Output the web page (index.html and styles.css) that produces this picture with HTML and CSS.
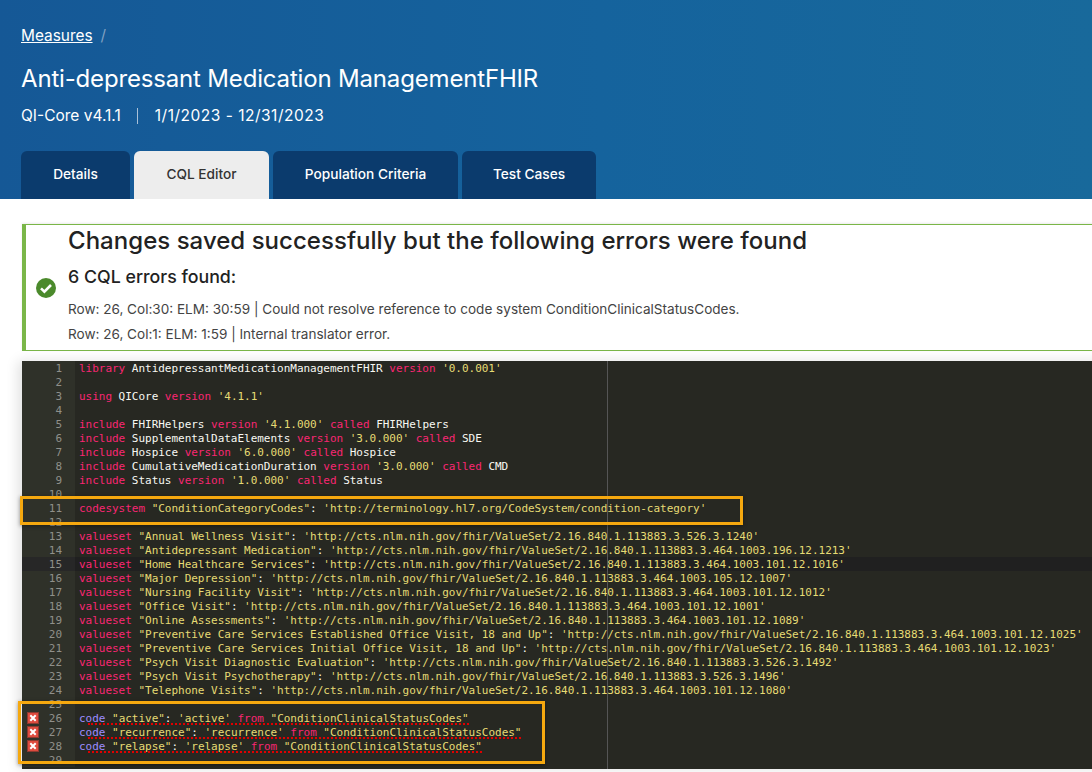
FILE: index.html
```html
<!DOCTYPE html>
<html lang="en">
<head>
<meta charset="utf-8">
<title>Anti-depressant Medication ManagementFHIR</title>
<link rel="stylesheet" href="styles.css">
</head>
<body>
<header class="hero">
  <nav class="crumbs"><a class="crumb-link" href="#">Measures</a><span class="crumb-sep">/</span></nav>
  <h1 class="title">Anti-depressant Medication ManagementFHIR</h1>
  <div class="meta"><span>QI-Core v4.1.1</span><span class="meta-sep"></span><span class="meta-date">1/1/2023 - 12/31/2023</span></div>
  <div class="tabs">
    <a class="tab tab-details">Details</a>
    <a class="tab tab-cql active">CQL Editor</a>
    <a class="tab tab-pop">Population Criteria</a>
    <a class="tab tab-test">Test Cases</a>
  </div>
</header>
<main class="content">
  <section class="alert">
    <svg class="alert-icon" viewBox="0 0 20 20" width="20" height="20"><circle cx="10" cy="10" r="10" fill="#4b8a2c"/><path d="M5 10.4l3.4 3.3L15 7" fill="none" stroke="#fff" stroke-width="2.6"/></svg>
    <div class="alert-body">
      <h2 class="alert-title">Changes saved successfully but the following errors were found</h2>
      <h3 class="alert-sub">6 CQL errors found:</h3>
      <p class="alert-line">Row: 26, Col:30: ELM: 30:59 | Could not resolve reference to code system ConditionClinicalStatusCodes.</p>
      <p class="alert-line">Row: 26, Col:1: ELM: 1:59 | Internal translator error.</p>
    </div>
  </section>
  <section class="editor">
    <div class="print-margin"></div>
    <div class="mark mark-a"></div>
    <div class="mark mark-b"></div>
    <div class="row"><span class="gut">1</span><span class="code"><i class="k">library</i> AntidepressantMedicationManagementFHIR <i class="k">version</i> <i class="s">'0.0.001'</i></span></div>
    <div class="row"><span class="gut">2</span><span class="code"></span></div>
    <div class="row"><span class="gut">3</span><span class="code"><i class="k">using</i> QICore <i class="k">version</i> <i class="s">'4.1.1'</i></span></div>
    <div class="row"><span class="gut">4</span><span class="code"></span></div>
    <div class="row"><span class="gut">5</span><span class="code"><i class="k">include</i> FHIRHelpers <i class="k">version</i> <i class="s">'4.1.000'</i> <i class="k">called</i> FHIRHelpers</span></div>
    <div class="row"><span class="gut">6</span><span class="code"><i class="k">include</i> SupplementalDataElements <i class="k">version</i> <i class="s">'3.0.000'</i> <i class="k">called</i> SDE</span></div>
    <div class="row"><span class="gut">7</span><span class="code"><i class="k">include</i> Hospice <i class="k">version</i> <i class="s">'6.0.000'</i> <i class="k">called</i> Hospice</span></div>
    <div class="row"><span class="gut">8</span><span class="code"><i class="k">include</i> CumulativeMedicationDuration <i class="k">version</i> <i class="s">'3.0.000'</i> <i class="k">called</i> CMD</span></div>
    <div class="row"><span class="gut">9</span><span class="code"><i class="k">include</i> Status <i class="k">version</i> <i class="s">'1.0.000'</i> <i class="k">called</i> Status</span></div>
    <div class="row"><span class="gut">10</span><span class="code"></span></div>
    <div class="row"><span class="gut">11</span><span class="code"><i class="k">codesystem</i> <i class="s">"ConditionCategoryCodes"</i>: <i class="s">'http://terminology.hl7.org/CodeSystem/condition-category'</i></span></div>
    <div class="row"><span class="gut">12</span><span class="code"></span></div>
    <div class="row"><span class="gut">13</span><span class="code"><i class="k">valueset</i> <i class="s">"Annual Wellness Visit"</i>: <i class="s">'http://cts.nlm.nih.gov/fhir/ValueSet/2.16.840.1.113883.3.526.3.1240'</i></span></div>
    <div class="row"><span class="gut">14</span><span class="code"><i class="k">valueset</i> <i class="s">"Antidepressant Medication"</i>: <i class="s">'http://cts.nlm.nih.gov/fhir/ValueSet/2.16.840.1.113883.3.464.1003.196.12.1213'</i></span></div>
    <div class="row current"><span class="gut">15</span><span class="code"><i class="k">valueset</i> <i class="s">"Home Healthcare Services"</i>: <i class="s">'http://cts.nlm.nih.gov/fhir/ValueSet/2.16.840.1.113883.3.464.1003.101.12.1016'</i></span></div>
    <div class="row"><span class="gut">16</span><span class="code"><i class="k">valueset</i> <i class="s">"Major Depression"</i>: <i class="s">'http://cts.nlm.nih.gov/fhir/ValueSet/2.16.840.1.113883.3.464.1003.105.12.1007'</i></span></div>
    <div class="row"><span class="gut">17</span><span class="code"><i class="k">valueset</i> <i class="s">"Nursing Facility Visit"</i>: <i class="s">'http://cts.nlm.nih.gov/fhir/ValueSet/2.16.840.1.113883.3.464.1003.101.12.1012'</i></span></div>
    <div class="row"><span class="gut">18</span><span class="code"><i class="k">valueset</i> <i class="s">"Office Visit"</i>: <i class="s">'http://cts.nlm.nih.gov/fhir/ValueSet/2.16.840.1.113883.3.464.1003.101.12.1001'</i></span></div>
    <div class="row"><span class="gut">19</span><span class="code"><i class="k">valueset</i> <i class="s">"Online Assessments"</i>: <i class="s">'http://cts.nlm.nih.gov/fhir/ValueSet/2.16.840.1.113883.3.464.1003.101.12.1089'</i></span></div>
    <div class="row"><span class="gut">20</span><span class="code"><i class="k">valueset</i> <i class="s">"Preventive Care Services Established Office Visit, 18 and Up"</i>: <i class="s">'http://cts.nlm.nih.gov/fhir/ValueSet/2.16.840.1.113883.3.464.1003.101.12.1025'</i></span></div>
    <div class="row"><span class="gut">21</span><span class="code"><i class="k">valueset</i> <i class="s">"Preventive Care Services Initial Office Visit, 18 and Up"</i>: <i class="s">'http://cts.nlm.nih.gov/fhir/ValueSet/2.16.840.1.113883.3.464.1003.101.12.1023'</i></span></div>
    <div class="row"><span class="gut">22</span><span class="code"><i class="k">valueset</i> <i class="s">"Psych Visit Diagnostic Evaluation"</i>: <i class="s">'http://cts.nlm.nih.gov/fhir/ValueSet/2.16.840.1.113883.3.526.3.1492'</i></span></div>
    <div class="row"><span class="gut">23</span><span class="code"><i class="k">valueset</i> <i class="s">"Psych Visit Psychotherapy"</i>: <i class="s">'http://cts.nlm.nih.gov/fhir/ValueSet/2.16.840.1.113883.3.526.3.1496'</i></span></div>
    <div class="row"><span class="gut">24</span><span class="code"><i class="k">valueset</i> <i class="s">"Telephone Visits"</i>: <i class="s">'http://cts.nlm.nih.gov/fhir/ValueSet/2.16.840.1.113883.3.464.1003.101.12.1080'</i></span></div>
    <div class="row"><span class="gut">25</span><span class="code"></span></div>
    <div class="row"><span class="gut"><svg class="err" viewBox="0 0 12 12" width="12" height="12"><rect x=".5" y=".5" width="11" height="11" fill="#de4b3e" stroke="#8c3a30"/><path d="M3.3 3.3l5.4 5.4M8.7 3.3l-5.4 5.4" stroke="#fff" stroke-width="2"/></svg>26</span><span class="code"><span class="squig"><i class="p">code</i> <i class="s">"active"</i>: <i class="s">'active'</i> <i class="k">from</i> <i class="s">"ConditionClinicalStatusCodes"</i></span></span></div>
    <div class="row"><span class="gut"><svg class="err" viewBox="0 0 12 12" width="12" height="12"><rect x=".5" y=".5" width="11" height="11" fill="#de4b3e" stroke="#8c3a30"/><path d="M3.3 3.3l5.4 5.4M8.7 3.3l-5.4 5.4" stroke="#fff" stroke-width="2"/></svg>27</span><span class="code"><span class="squig"><i class="p">code</i> <i class="s">"recurrence"</i>: <i class="s">'recurrence'</i> <i class="k">from</i> <i class="s">"ConditionClinicalStatusCodes"</i></span></span></div>
    <div class="row"><span class="gut"><svg class="err" viewBox="0 0 12 12" width="12" height="12"><rect x=".5" y=".5" width="11" height="11" fill="#de4b3e" stroke="#8c3a30"/><path d="M3.3 3.3l5.4 5.4M8.7 3.3l-5.4 5.4" stroke="#fff" stroke-width="2"/></svg>28</span><span class="code"><span class="squig"><i class="p">code</i> <i class="s">"relapse"</i>: <i class="s">'relapse'</i> <i class="k">from</i> <i class="s">"ConditionClinicalStatusCodes"</i></span></span></div>
    <div class="row"><span class="gut">29</span><span class="code"></span></div>
  </section>
</main>
</body>
</html>
```
FILE: styles.css
```css
* { box-sizing: border-box; }
html, body { margin: 0; padding: 0; }
body {
  width: 1092px;
  height: 772px;
  overflow: hidden;
  background: #fff;
  font-family: Inter, "Liberation Sans", sans-serif;
  color: #333;
}
.hero {
  height: 199px;
  padding: 26px 21px 0;
  background: linear-gradient(90deg, #155896 0%, #15639d 55%, #18699b 100%);
  color: #fff;
  display: flex;
  flex-direction: column;
}
.crumbs { display: flex; gap: 8px; font-size: 15.4px; line-height: 19px; }
.crumb-link { color: #fff; text-decoration: underline; }
.crumb-sep { color: #7fa0c2; }
.title { margin: 19px 0 0; font-size: 24px; line-height: 30px; font-weight: 400; letter-spacing: -.17px; }
.meta { margin-top: 12px; display: flex; align-items: center; font-size: 15.5px; line-height: 20px; }
.meta-sep { width: 1px; height: 16px; margin: 0 17px 0 16px; background: #a9c0d8; }
.meta-date { letter-spacing: .5px; }
.tabs { margin-top: 25px; display: flex; gap: 4px; height: 48px; flex: none; }
.tab {
  display: flex;
  align-items: center;
  justify-content: center;
  background: #0b3b6d;
  color: #fff;
  font-size: 13.7px;
  font-weight: 500;
  border-radius: 6px 6px 0 0;
  padding-bottom: 3px;
}
.tab-details { width: 109px; }
.tab-cql { width: 135px; }
.tab-pop { width: 185px; }
.tab-test { width: 134px; }
.tab.active { background: #ededed; color: #333; }
.content { padding: 25px 0 0 22px; width: 1300px; }
.alert {
  width: 1300px;
  height: 127px;
  display: flex;
  align-items: flex-start;
  border: 1px solid #7ab648;
  border-left-width: 4px;
  background: #fff;
  box-shadow: 0 -1px 2px rgba(0, 0, 0, .08);
}
.alert-icon { margin: 53px 0 0 10px; flex: none; }
.alert-body { margin-left: 12px; }
.alert-title { margin: 1px 0 0; font-size: 24px; line-height: 30px; font-weight: 500; letter-spacing: .03px; color: #222; }
.alert-sub { margin: 9px 0 0; font-size: 17.8px; line-height: 24px; font-weight: 500; color: #222; }
.alert-line { margin: 9px 0 0; font-size: 13.55px; line-height: 16px; color: #444; }
.alert-sub + .alert-line { margin-top: 12px; }
.editor {
  position: relative;
  margin: 10px 0 0;
  width: 1150px;
  height: 408px;
  background: #272822;
  font-family: "DejaVu Sans Mono", monospace;
  font-size: 11px;
  line-height: 14px;
  letter-spacing: -.02px;
  color: #f8f8f2;
  box-shadow: -4px 0 12px rgba(0, 0, 0, .12);
}
.row { display: flex; height: 14px; white-space: pre; }
.gut {
  position: relative;
  flex: none;
  width: 53px;
  padding: 1px 13px 0 0;
  text-align: right;
  background: #2f3129;
  color: #8f908a;
}
.code { padding: 1px 0 0 4px; }
.code i { font-style: normal; }
.current { background: #202020; }
.current .gut { background: #272727; }
.k { color: #f92672; }
.s { color: #e6db74; }
.p { color: #9d8cff; }
.squig { position: relative; display: inline-block; height: 13px; vertical-align: top; }
.squig::after { content: ""; position: absolute; left: 9px; right: 0; bottom: 0; border-bottom: 2px dotted #e00000; }
.err { position: absolute; left: 5px; top: 1px; }
.print-margin { position: absolute; left: 585px; top: 0; bottom: 0; width: 1px; background: #555; }
.mark { position: absolute; border: 3px solid #f5a80f; box-shadow: 0 1px 4px rgba(0,0,0,.4); z-index: 2; }
.mark-a { left: -2px; top: 135px; width: 723px; height: 29px; }
.mark-b { left: -4px; top: 340px; width: 527px; height: 63px; }
```
